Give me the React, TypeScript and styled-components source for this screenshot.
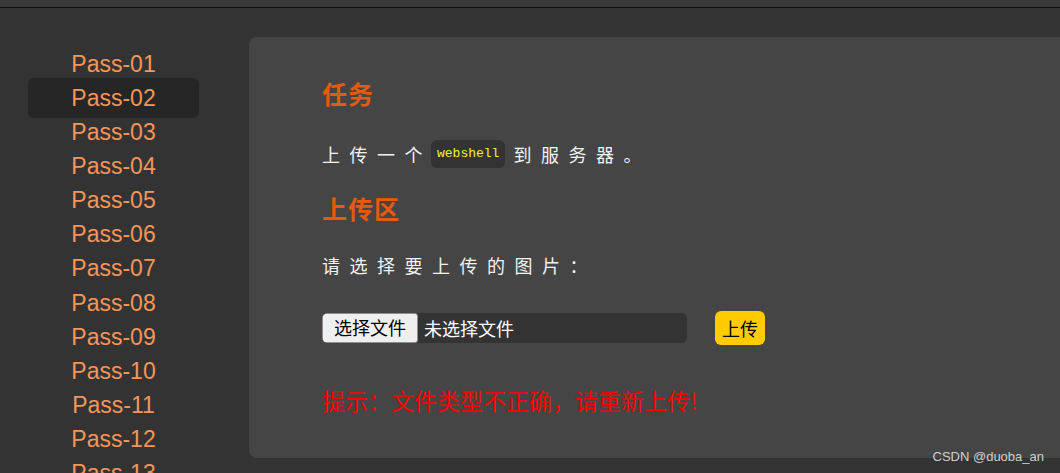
import React from "react";
import styled, { createGlobalStyle } from "styled-components";

const GlobalStyle = createGlobalStyle`
  html, body {
    margin: 0;
    padding: 0;
    background: #333333;
  }
  * {
    box-sizing: border-box;
  }
`;

const Page = styled.div`
  width: 1060px;
  height: 473px;
  overflow: hidden;
  position: relative;
  background: #333333;
  font-family: "Liberation Sans", Arial, "Noto Sans CJK SC", sans-serif;
`;

const TopBar = styled.div`
  height: 8px;
  background: #383838;
  border-bottom: 1px solid #0d0d0d;
`;

const Body = styled.div`
  display: flex;
  align-items: flex-start;
  padding-top: 29px;
`;

const Sidebar = styled.nav`
  width: 249px;
  flex-shrink: 0;
  padding: 10px 0 0 28px;
  display: flex;
  flex-direction: column;
`;

const NavItem = styled.a<{ $active?: boolean }>`
  display: block;
  width: 171px;
  height: ${(p) => (p.$active ? "40px" : "34.1px")};
  margin: ${(p) => (p.$active ? "-3px 0" : "0")};
  line-height: ${(p) => (p.$active ? "40px" : "34px")};
  text-align: center;
  font-size: 23px;
  color: #f79558;
  text-decoration: none;
  border-radius: 6px;
  background: ${(p) => (p.$active ? "#262626" : "transparent")};
`;

const Panel = styled.main`
  flex: 1;
  height: 421px;
  background: #454545;
  border-radius: 8px 0 0 8px;
  padding: 38px 0 0 73px;
`;

const Heading = styled.h2<{ $gap?: number }>`
  margin: ${(p) => p.$gap ?? 0}px 0 0 0;
  font-family: "Noto Sans CJK SC", sans-serif;
  font-size: 25px;
  font-weight: 700;
  line-height: 36px;
  letter-spacing: 1px;
  color: #e65a0a;
`;

const Text = styled.p<{ $gap?: number }>`
  margin: ${(p) => p.$gap ?? 16}px 0 0 0;
  display: flex;
  align-items: center;
  font-family: "Noto Sans CJK SC", sans-serif;
  font-size: 18px;
  font-weight: 400;
  line-height: 30px;
  letter-spacing: 9.5px;
  color: #f2f2f2;
`;

const Code = styled.code`
  display: inline-block;
  margin: 0 8px 0 -1px;
  padding: 0 6px;
  height: 28px;
  line-height: 28px;
  border-radius: 6px;
  background: #333333;
  color: #f5f03a;
  font-family: "Liberation Mono", monospace;
  font-size: 13px;
  letter-spacing: 0;
`;

const UploadRow = styled.div`
  display: flex;
  align-items: center;
  margin-top: 31px;
  gap: 28px;
`;

const FileBox = styled.label`
  display: flex;
  align-items: center;
  width: 365px;
  height: 30px;
  background: #333333;
  border-radius: 6px;
  font-family: "Noto Sans CJK SC", sans-serif;
  font-size: 18px;
  color: #ffffff;
  overflow: hidden;
`;

const FileButton = styled.span`
  height: 30px;
  line-height: 27px;
  padding: 0 11px;
  background: #efefef;
  color: #000000;
  border: 1px solid #8f8f8f;
  border-radius: 3px;
  margin-right: 6px;
`;

const SubmitButton = styled.button`
  width: 50px;
  height: 34px;
  border: none;
  border-radius: 6px;
  background: #ffcc00;
  color: #000000;
  font-family: "Noto Sans CJK SC", sans-serif;
  font-size: 18px;
  padding: 0;
`;

const ErrorText = styled.p`
  margin: 40px 0 0 0;
  font-family: "Noto Sans CJK SC", sans-serif;
  font-size: 23px;
  line-height: 30px;
  color: #ff0000;
`;

const Watermark = styled.div`
  position: absolute;
  right: 16px;
  bottom: 9px;
  font-family: "Liberation Sans", Arial, sans-serif;
  font-size: 13px;
  color: #cfcfcf;
`;

const passes = Array.from({ length: 13 }, (_, i) =>
  `Pass-${String(i + 1).padStart(2, "0")}`
);

export default function App() {
  return (
    <>
      <GlobalStyle />
      <Page>
        <TopBar />
        <Body>
          <Sidebar>
            {passes.map((p) => (
              <NavItem key={p} $active={p === "Pass-02"} href="#">
                {p}
              </NavItem>
            ))}
          </Sidebar>
          <Panel>
            <Heading>任务</Heading>
            <Text $gap={28}>
              上传一个<Code>webshell</Code>到服务器。
            </Text>
            <Heading $gap={21}>上传区</Heading>
            <Text $gap={24}>请选择要上传的图片：</Text>
            <UploadRow>
              <FileBox>
                <FileButton>选择文件</FileButton>
                未选择文件
              </FileBox>
              <SubmitButton>上传</SubmitButton>
            </UploadRow>
            <ErrorText>提示：文件类型不正确，请重新上传!</ErrorText>
          </Panel>
        </Body>
        <Watermark>CSDN @duoba_an</Watermark>
      </Page>
    </>
  );
}
